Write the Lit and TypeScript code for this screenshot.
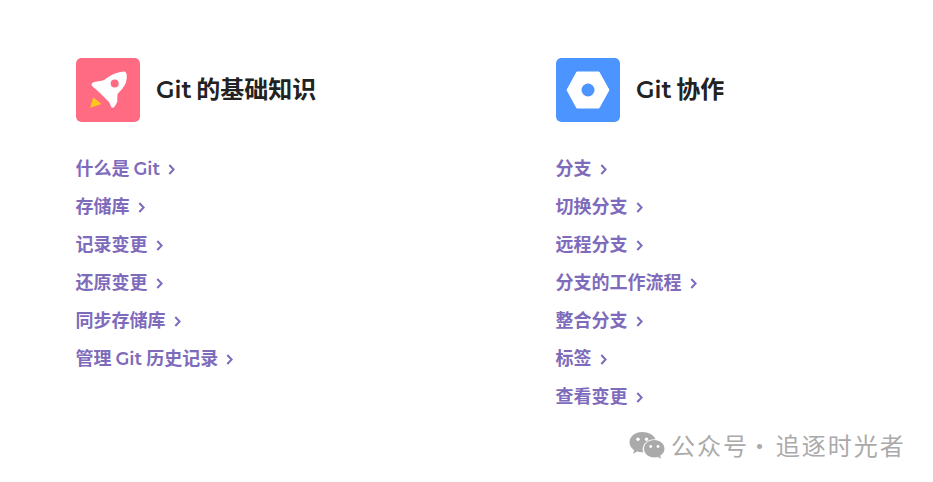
import { LitElement, html, css, svg } from "lit";
import { customElement } from "lit/decorators.js";

const rocket = svg`<svg width="64" height="64" viewBox="0 0 64 64">
  <rect width="64" height="64" rx="5" fill="#ff6b83"/>
  <path d="M48.500 13.600C42.500 14 38 15.500 34 18 31 19.800 29 21.500 27 22.500L18 24C15.800 24.500 15 26.500 16 28L23 34 33 44 35 48.500C35.800 50.500 37.800 50 39 48L41.200 44 41.500 36C45 32.500 48 29 50 24.500 51 20 51.500 14.600 48.500 13.600Z" fill="#fff"/>
  <circle cx="38.700" cy="25.500" r="4" fill="#ff6b83"/>
  <path d="M14 50 17.200 39.300 25.500 46Z" fill="#ffc61c"/>
</svg>`;

const hexagon = svg`<svg width="64" height="64" viewBox="0 0 64 64">
  <rect width="64" height="64" rx="5" fill="#4c94ff"/>
  <path d="M11 32 20.800 14H43L53 32 43 50H20.800Z" fill="#fff" stroke="#fff" stroke-width="1" stroke-linejoin="round"/>
  <circle cx="32" cy="32" r="6.500" fill="#4c94ff"/>
</svg>`;

const wechat = svg`<svg width="36" height="30" viewBox="0 0 36 30">
  <path d="M13 1C6 1 .5 5.500 .5 11.200c0 3.300 1.800 6 4.700 8l-1.200 3.600 4.200-2.200c1.500.4 3 .7 4.800.7l1.200-.1c-.3-1-.5-2-.5-3 0-5.600 5.200-10 11.600-10l1.200.1C25.300 4.300 19.700 1 13 1Z" fill="#aaa"/>
  <path d="M35.500 17.800c0-4.800-4.700-8.700-10.200-8.700-5.800 0-10.300 3.900-10.300 8.700s4.500 8.700 10.300 8.700c1.200 0 2.400-.2 3.500-.5l3.300 1.800-.9-3c2.600-1.800 4.300-4.200 4.300-7Z" fill="#aaa"/>
  <circle cx="9" cy="8.200" r="1.700" fill="#fff"/><circle cx="17.500" cy="8.200" r="1.700" fill="#fff"/>
  <circle cx="21.700" cy="15.500" r="1.400" fill="#fff"/><circle cx="29" cy="15.500" r="1.400" fill="#fff"/>
</svg>`;

const chevron = svg`<svg class="chev" width="7" height="11" viewBox="0 0 7 11"><path d="M1.300 1 5.600 5.500 1.300 10" fill="none" stroke="currentColor" stroke-width="2"/></svg>`;

const columns = [
  { icon: rocket, title: "Git 的基础知识", links: ["什么是 Git", "存储库", "记录变更", "还原变更", "同步存储库", "管理 Git 历史记录"] },
  { icon: hexagon, title: "Git 协作", links: ["分支", "切换分支", "远程分支", "分支的工作流程", "整合分支", "标签", "查看变更"] },
];

@customElement("app-root")
export class AppRoot extends LitElement {
  static styles = css`
    :host {
      display: block;
      position: relative;
      width: 933px;
      height: 482px;
      background: #fff;
      overflow: hidden;
      font-family: "Montserrat", "Lato", "Noto Sans CJK SC", sans-serif;
    }
    .grid {
      display: grid;
      grid-template-columns: 480px 1fr;
      padding: 58px 0 0 76px;
    }
    .head {
      display: flex;
      align-items: center;
      gap: 16px;
      height: 64px;
    }
    .head svg { display: block; border-radius: 5px; }
    h2 {
      margin: 0;
      font-size: 24px;
      line-height: 64px;
      font-weight: 600;
      word-spacing: -2px;
      color: #222;
    }
    ul {
      list-style: none;
      margin: 28px 0 0 -0.5px;
      padding: 0;
    }
    li {
      height: 38px;
      line-height: 38px;
      font-size: 18px;
      font-weight: 600;
      word-spacing: -1px;
      color: #7e6bbb;
      display: flex;
      align-items: center;
      gap: 8px;
    }
    .chev { display: block; flex: none; margin-top: 1px; }
    .mark {
      position: absolute;
      left: 629px;
      top: 429px;
      display: flex;
      align-items: center;
      gap: 6px;
      color: #aaa;
      font-size: 24px;
      line-height: 30px;
      letter-spacing: 2px;
      word-spacing: -7px;
      font-family: "Noto Sans CJK SC", sans-serif;
      white-space: nowrap;
    }
    .mark svg { display: block; margin-top: 2px; }
    .dot { margin: 0 2px 0 -2px; }
  `;

  render() {
    return html`
      <div class="grid">
        ${columns.map(
          (c) => html`<section>
            <div class="head">${c.icon}<h2>${c.title}</h2></div>
            <ul>${c.links.map((l) => html`<li><span>${l}</span>${chevron}</li>`)}</ul>
          </section>`
        )}
      </div>
      <div class="mark">${wechat}<span>公众号 <span class="dot">·</span> 追逐时光者</span></div>
    `;
  }
}
